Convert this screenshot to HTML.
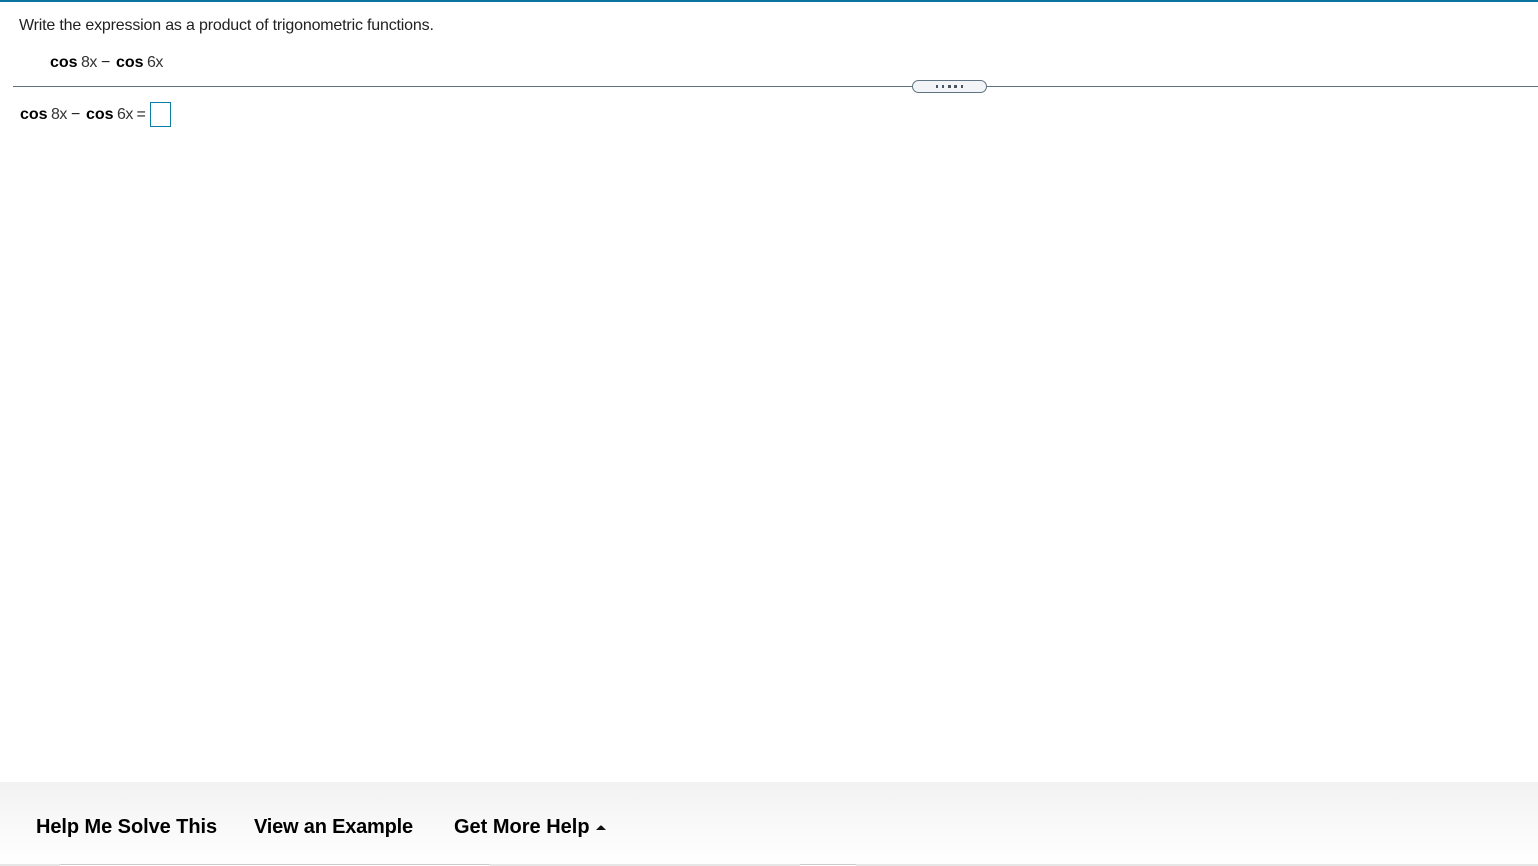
<!DOCTYPE html>
<html lang="en">
<head>
<meta charset="utf-8">
<title>Write the expression</title>
<style>
html,body{margin:0;padding:0;background:#fff;}
body{position:relative;width:1538px;height:866px;overflow:hidden;font-family:"Liberation Sans",Arial,sans-serif;font-size:16px;color:#222;}
.t{position:absolute;white-space:pre;line-height:18px;height:18px;}
.b{font-weight:bold;color:#000;}
.n{letter-spacing:-0.5px;color:#333;}
#top{position:absolute;left:0;top:0;width:1538px;height:2px;background:#0b75a0;}
#rule{position:absolute;left:13px;top:86px;width:1525px;height:1px;background:#5f7482;}
#handle{position:absolute;left:912px;top:80px;width:75px;height:13px;box-sizing:border-box;border:1px solid #5f7482;border-radius:7px;background:#f2f4f8;}
.d{position:absolute;top:85px;height:3px;background:#4a5560;}
#box{position:absolute;left:150px;top:102px;width:21px;height:25px;box-sizing:border-box;border:1px solid #0b7ea6;background:#fff;}
#foot{position:absolute;left:0;top:782px;width:1538px;height:84px;background:linear-gradient(to bottom,#f2f2f2,#fefefe 92%);}
#base{position:absolute;left:0;top:864px;width:1538px;height:2px;background:#e6e6e6;}
.w{position:absolute;top:864px;height:2px;background:#fff;border-top:1px solid #ccc;box-sizing:border-box;}
.f{position:absolute;top:815px;font-size:20px;font-weight:bold;color:#000;line-height:24px;white-space:pre;}
#tri{position:absolute;left:596px;top:825px;}
</style>
</head>
<body>
<div id="top"></div>
<div class="t" style="left:19px;top:17px;letter-spacing:-0.18px;">Write the expression as a product of trigonometric functions.</div>
<div class="t b" style="left:50px;top:54px;">cos</div>
<div class="t n" style="left:81px;top:54px;">8x</div>
<div class="t" style="left:101px;top:54px;">−</div>
<div class="t b" style="left:116px;top:54px;">cos</div>
<div class="t n" style="left:147px;top:54px;">6x</div>
<div id="rule"></div>
<div id="handle"></div>
<div class="d" style="left:936px;width:2px;"></div>
<div class="d" style="left:942px;width:2px;"></div>
<div class="d" style="left:948px;width:3px;"></div>
<div class="d" style="left:954px;width:3px;"></div>
<div class="d" style="left:961px;width:2px;"></div>
<div class="t b" style="left:20px;top:106px;">cos</div>
<div class="t n" style="left:51px;top:106px;">8x</div>
<div class="t" style="left:71px;top:106px;">−</div>
<div class="t b" style="left:86px;top:106px;">cos</div>
<div class="t n" style="left:117px;top:106px;">6x</div>
<div class="t" style="left:136.500px;top:106px;">=</div>
<div id="box"></div>
<div id="foot"></div>
<div id="base"></div>
<div class="w" style="left:60px;width:430px;"></div>
<div class="w" style="left:800px;width:56px;"></div>
<div class="f" style="left:36px;letter-spacing:-0.07px;">Help Me Solve This</div>
<div class="f" style="left:254px;letter-spacing:-0.2px;">View an Example</div>
<div class="f" style="left:454px;">Get More Help</div>
<svg id="tri" width="10" height="6" viewBox="0 0 10 6"><path d="M0 5L4.5 0.5h1L10 5z" fill="#111"/></svg>
</body>
</html>
